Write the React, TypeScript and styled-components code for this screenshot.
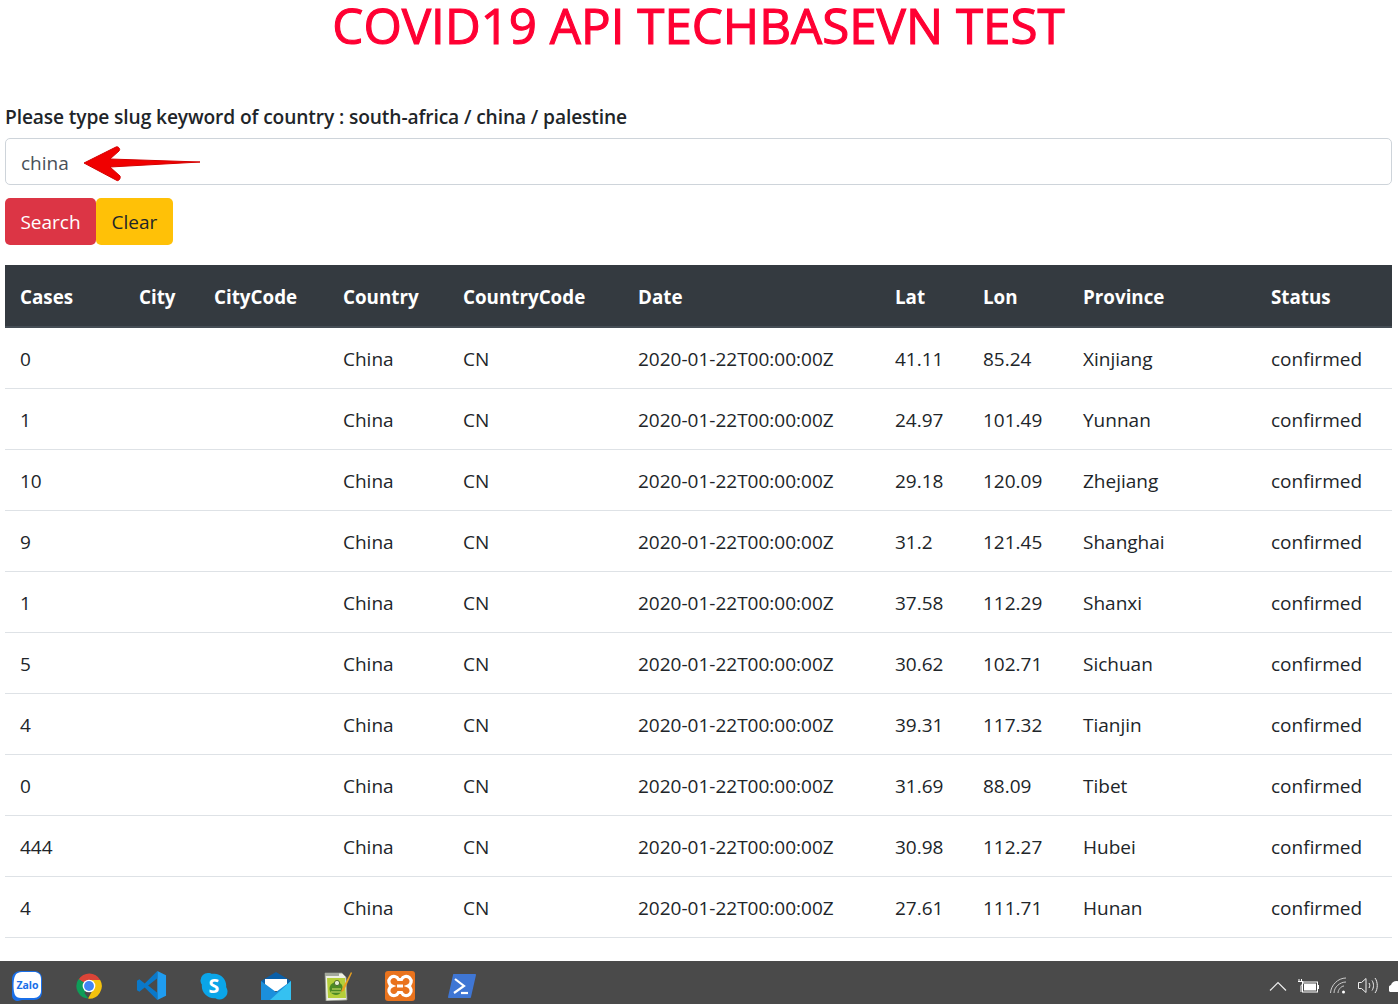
import React from "react";
import styled, { createGlobalStyle } from "styled-components";

const columns: { label: string; width: number }[] = [
  { label: "Cases", width: 119 },
  { label: "City", width: 75 },
  { label: "CityCode", width: 129 },
  { label: "Country", width: 120 },
  { label: "CountryCode", width: 175 },
  { label: "Date", width: 257 },
  { label: "Lat", width: 88 },
  { label: "Lon", width: 100 },
  { label: "Province", width: 188 },
  { label: "Status", width: 136 },
];

const rows: [string, string, string, string][] = [
  ["0", "41.11", "85.24", "Xinjiang"],
  ["1", "24.97", "101.49", "Yunnan"],
  ["10", "29.18", "120.09", "Zhejiang"],
  ["9", "31.2", "121.45", "Shanghai"],
  ["1", "37.58", "112.29", "Shanxi"],
  ["5", "30.62", "102.71", "Sichuan"],
  ["4", "39.31", "117.32", "Tianjin"],
  ["0", "31.69", "88.09", "Tibet"],
  ["444", "30.98", "112.27", "Hubei"],
  ["4", "27.61", "111.71", "Hunan"],
];

const GlobalStyle = createGlobalStyle`
  * { box-sizing: border-box; }
  html, body { margin: 0; padding: 0; background: #fff; }
  body {
    font-family: "Open Sans", "Noto Sans", sans-serif;
    color: #212529;
    overflow: hidden;
  }
`;

const Page = styled.div`
  width: 1398px;
  height: 1004px;
  display: flex;
  flex-direction: column;
  overflow: hidden;
`;

const Content = styled.main`
  flex: 1;
  min-height: 0;
  padding: 0 6px 0 5px;
`;

const Title = styled.h1`
  margin: 0;
  height: 54px;
  font-size: 49.3px;
  font-weight: 400;
  line-height: 50px;
  text-align: center;
  color: #ff0033;
  -webkit-text-stroke: 1.1px #ff0033;
`;

const Label = styled.label`
  display: block;
  margin-top: 51px;
  height: 33px;
  font-size: 19.2px;
  font-weight: 600;
  line-height: 24px;
  letter-spacing: -0.12px;
`;

const InputWrap = styled.div`
  position: relative;
`;

const SearchInput = styled.input`
  display: block;
  width: 100%;
  height: 47px;
  padding: 2px 15px 0;
  border: 1px solid #ced4da;
  border-radius: 5px;
  font: inherit;
  font-size: 19px;
  color: #495057;
  background: #fff;
`;

const Arrow = styled.svg`
  position: absolute;
  left: 78px;
  top: 7px;
`;

const Buttons = styled.div`
  display: flex;
  margin-top: 13px;
`;

const Button = styled.button<{ $bg: string; $fg: string; $w: number }>`
  width: ${(p) => p.$w}px;
  height: 47px;
  border: none;
  border-radius: 5px;
  font: inherit;
  font-size: 19px;
  background: ${(p) => p.$bg};
  color: ${(p) => p.$fg};
`;

const Table = styled.table`
  width: 1387px;
  margin-top: 20px;
  border-collapse: collapse;
  table-layout: fixed;
`;

const HeadCell = styled.th`
  height: 62px;
  padding: 2px 0 0 15px;
  background: #343a40;
  border-bottom: 2px solid #454d55;
  color: #fff;
  font-size: 18.8px;
  font-weight: 700;
  text-align: left;
  white-space: nowrap;
`;

const Cell = styled.td`
  height: 61px;
  padding: 2px 0 0 15px;
  border-bottom: 1px solid #dee2e6;
  font-size: 19px;
  white-space: nowrap;
`;

const Taskbar = styled.footer`
  height: 43px;
  flex: none;
  display: flex;
  align-items: center;
  background: #4a4a4a;
  padding: 6px 0 0 12px;
`;

const AppIcons = styled.div`
  display: flex;
  gap: 33px;
  align-items: center;
`;

const Tray = styled.div`
  margin-left: auto;
  display: flex;
  align-items: center;
  gap: 11px;
  margin-right: -7px;
`;

const Zalo = () => (
  <svg width="30" height="30" viewBox="0 0 30 30">
    <path d="M9 0h13c5 0 8 3 8 8v13c0 5-3 8-8 8H10l-4 1c-3 0-6-2-6-6V8c0-5 4-8 9-8z" fill="#1a6fe8" />
    <path d="M10 1h12c4 0 7 2 7 7v12c0 4-3 7-7 7H9c-3 0-5-1-6-3-2-4-2-15 0-19 1-3 4-4 7-4z" fill="#fff" />
    <text x="15.500" y="18" textAnchor="middle" fontSize="10.500" fontWeight="700" fill="#1a6fe8" fontFamily="Open Sans, sans-serif">Zalo</text>
  </svg>
);

const Chrome = () => (
  <svg width="28" height="28" viewBox="0 0 30 30">
    <path d="M15 15L3.800 8A13.500 13.500 0 0 1 27 8.500H15z" fill="#db4437" />
    <path d="M15 15L10 22.500 14.500 28.500A13.500 13.500 0 0 1 3.800 7.500z" fill="#0f9d58" />
    <path d="M15 8.500h12A13.500 13.500 0 0 1 14 28.500l6-11z" fill="#f4c20d" />
    <circle cx="15" cy="15" r="6.800" fill="#fff" />
    <circle cx="15" cy="15" r="5.300" fill="#4285f4" />
  </svg>
);

const VsCode = () => (
  <svg width="31" height="31" viewBox="0 0 32 32">
    <path d="M22 1l9 4.500v21L22 31V1z" fill="#1f9cf0" />
    <path d="M22 1L9 14 3.500 9.500 1 11v10l2.500 1.500L9 18 22 31v-7.500L12.500 16 22 8.500z" fill="#0a78c9" />
  </svg>
);

const Skype = () => (
  <svg width="28" height="28" viewBox="0 0 30 30">
    <path d="M9 1c2 0 3 .6 4 1 8.500-1.500 16 5.500 15 14 .6 1.200 1.500 3 1.500 5a8.500 8.500 0 0 1-13 7C8 29 1 21.500 2 13.500 1.500 12.500.5 11 .5 9A8 8 0 0 1 9 1z" fill="#0ba5e8" />
    <text x="15" y="22.500" textAnchor="middle" fontSize="21" fontWeight="700" fill="#fff" fontFamily="Open Sans, sans-serif">S</text>
  </svg>
);

const Mail = () => (
  <svg width="30" height="28" viewBox="0 0 30 28">
    <path d="M0 9L15 0l15 9v2H0z" fill="#0a5fa8" />
    <path d="M4 7h22v12H4z" fill="#fff" />
    <path d="M0 9l15 11 15-11v19H0z" fill="#1b8fdc" />
    <path d="M30 9v19H9z" fill="#35c1f1" />
  </svg>
);

const Notepad = () => (
  <svg width="28" height="30" viewBox="0 0 28 30">
    <path d="M1 2h17l4 4 1 23-21 1z" fill="#eef0e4" stroke="#8a8f85" strokeWidth=".8" />
    <path d="M1 2h14v3H1z" fill="#a3a89c" />
    <path d="M3 7h18l1 20H4z" fill="#b5cf3a" />
    <path d="M6 15c3-5 9-5 12-1 2 5-2 10-6 10s-8-4-6-9z" fill="#4c8a24" />
    <path d="M8 18h9M7 21h10" stroke="#d6e56b" strokeWidth="1" />
    <circle cx="13" cy="12" r="2.600" fill="#e5efd2" stroke="#27440f" strokeWidth=".7" />
    <path d="M27 1L18 18l-1 3 3-1.500L28 2z" fill="#e8a020" />
  </svg>
);

const Xampp = () => (
  <svg width="30" height="30" viewBox="0 0 30 30">
    <rect x="0" y="0" width="30" height="30" rx="3" fill="#e9731d" />
    <path d="M7 15a5 5 0 1 1 6.500-6.500h3A5 5 0 1 1 23 15a5 5 0 1 1-6.500 6.500h-3A5 5 0 1 1 7 15z" fill="none" stroke="#fff" strokeWidth="3.200" />
    <path d="M12 15h6" stroke="#fff" strokeWidth="3" />
  </svg>
);

const Shell = () => (
  <svg width="28" height="24" viewBox="0 0 28 24">
    <path d="M6 0h21c.6 0 1 .4 1 1l-5 22c0 .6-.6 1-1 1H1c-.6 0-1-.4-1-1L5 1c0-.6.4-1 1-1z" fill="#3f76d4" />
    <path d="M7 5l9 7-10 7" fill="none" stroke="#fff" strokeWidth="2.200" />
    <path d="M13 19h7" stroke="#fff" strokeWidth="2.200" />
  </svg>
);

const Chevron = () => (
  <svg width="18" height="10" viewBox="0 0 18 10">
    <path d="M1 9.500L9 1.500l8 8" fill="none" stroke="#eee" strokeWidth="1.200" />
  </svg>
);

const Battery = () => (
  <svg width="21" height="14" viewBox="0 0 21 14">
    <path d="M3.500 0v2M1 0v2M0 2.500h5v2.500L3 6.500v6.500" fill="none" stroke="#fff" />
    <rect x="4.500" y="3" width="15" height="10" fill="none" stroke="#fff" />
    <rect x="6" y="4.500" width="12" height="7" fill="#fff" />
    <path d="M20 6h1v4h-1z" fill="#fff" />
  </svg>
);

const Wifi = () => (
  <svg width="17" height="17" viewBox="0 0 17 17">
    <g fill="none" stroke="#ccc" strokeWidth="1">
      <path d="M.5 16C1 8 8 1 16 1" />
      <path d="M4 16c0-6 6-11 12-11" />
      <path d="M8 16c0-3 3-7 6-7" />
    </g>
    <circle cx="13.500" cy="15" r="1.500" fill="#fff" />
  </svg>
);

const Speaker = () => (
  <svg width="20" height="17" viewBox="0 0 20 17">
    <path d="M.5 5.500h3L8 1.500v14l-4.500-4h-3z" fill="none" stroke="#eee" />
    <path d="M11 6c1 1.500 1 3.500 0 5M14 3.500c2 3 2 7 0 10M17 1c3 4 3 11 0 15" fill="none" stroke="#eee" />
  </svg>
);

const Cloud = () => (
  <svg width="16" height="14" viewBox="0 0 16 14">
    <path d="M1 13a4 4 0 0 1 1-7c1-4 6-5 9-3 3 1 5 3 5 6v4z" fill="#fff" />
  </svg>
);

export default function App() {
  return (
    <Page>
      <GlobalStyle />
      <Content>
        <Title>COVID19 API TECHBASEVN TEST</Title>
        <Label>Please type slug keyword of country : south-africa / china / palestine</Label>
        <InputWrap>
          <SearchInput defaultValue="china" />
          <Arrow width="122" height="38" viewBox="0 0 122 38">
            <path
              d="M1 18L33 2c2-1 5 2 3 4L27 14l90 3-90 5 10 9c1 3-2 6-4 4z"
              fill="#f00000"
              stroke="#d40000"
              strokeWidth="1"
            />
          </Arrow>
        </InputWrap>
        <Buttons>
          <Button $bg="#dc3545" $fg="#fff" $w={91}>Search</Button>
          <Button $bg="#ffc107" $fg="#212529" $w={77}>Clear</Button>
        </Buttons>
        <Table>
          <colgroup>
            {columns.map((c) => (
              <col key={c.label} width={c.width} />
            ))}
          </colgroup>
          <thead>
            <tr>
              {columns.map((c) => (
                <HeadCell key={c.label}>{c.label}</HeadCell>
              ))}
            </tr>
          </thead>
          <tbody>
            {rows.map((r) => (
              <tr key={r[3]}>
                <Cell>{r[0]}</Cell>
                <Cell />
                <Cell />
                <Cell>China</Cell>
                <Cell>CN</Cell>
                <Cell>2020-01-22T00:00:00Z</Cell>
                <Cell>{r[1]}</Cell>
                <Cell>{r[2]}</Cell>
                <Cell>{r[3]}</Cell>
                <Cell>confirmed</Cell>
              </tr>
            ))}
          </tbody>
        </Table>
      </Content>
      <Taskbar>
        <AppIcons>
          <Zalo />
          <Chrome />
          <VsCode />
          <Skype />
          <Mail />
          <Notepad />
          <Xampp />
          <Shell />
        </AppIcons>
        <Tray>
          <Chevron />
          <Battery />
          <Wifi />
          <Speaker />
          <Cloud />
        </Tray>
      </Taskbar>
    </Page>
  );
}
